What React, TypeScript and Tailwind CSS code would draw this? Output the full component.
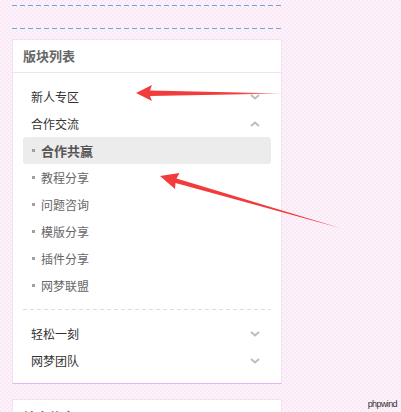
import React from 'react';

const cn = '"Noto Sans CJK SC", "Noto Sans", sans-serif';

const Chevron = ({ up = false }: { up?: boolean }) => (
  <svg width="10" height="6" viewBox="0 0 10 6" className="text-[#bdbdbd]">
    <path
      d={up ? 'M1 5 L5 1.5 L9 5' : 'M1 1 L5 4.5 L9 1'}
      fill="none"
      stroke="currentColor"
      strokeWidth="2"
    />
  </svg>
);

const TopItem = ({ label, up }: { label: string; up?: boolean }) => (
  <div className="flex h-[27px] items-center justify-between pl-2 pr-[11px] text-[12px] text-[#333]">
    <span>{label}</span>
    <Chevron up={up} />
  </div>
);

const SubItem = ({ label, active }: { label: string; active?: boolean }) => (
  <div
    className={
      'flex h-[27px] items-center gap-[6px] rounded-[3px] pl-[9px] ' +
      (active ? 'bg-[#ececec] text-[13px] font-bold text-[#555]' : 'text-[12px] text-[#666]')
    }
  >
    <span className="h-[3px] w-[3px] bg-[#a0a0a0]" />
    <span>{label}</span>
  </div>
);

const subs = ['合作共赢', '教程分享', '问题咨询', '模版分享', '插件分享', '网梦联盟'];

export default function App() {
  return (
    <div
      className="relative h-[412px] w-[401px] overflow-hidden bg-[#fcf0fa] bg-[conic-gradient(#fbe8f6_25%,#fdf3fb_0_50%,#fbe8f6_0_75%,#fdf3fb_0)] bg-[length:4px_4px]"
      style={{ fontFamily: cn }}
    >
      <div className="ml-3 w-[270px] pt-[5px]">
        <div className="h-px bg-[repeating-linear-gradient(90deg,#6fa7d7_0_5px,transparent_5px_8px)]" />
        <div className="mt-[22px] h-px bg-[repeating-linear-gradient(90deg,#6fa7d7_0_5px,transparent_5px_8px)]" />

        <div className="mt-[10px] border border-[#f4e0f6] border-b-[#e6b4ee] bg-white">
          <div className="flex h-[33px] items-center border-b border-[#f4e0f6] pl-[10px] text-[13px] font-bold text-[#666]">
            版块列表
          </div>
          <div className="px-[10px] pb-[9px] pt-[10px]">
            <TopItem label="新人专区" />
            <TopItem label="合作交流" up />
            {subs.map((s, i) => (
              <SubItem key={s} label={s} active={i === 0} />
            ))}
            <div className="my-[10px] h-px bg-[repeating-linear-gradient(90deg,#dcdcdc_0_4px,transparent_4px_7px)]" />
            <TopItem label="轻松一刻" />
            <TopItem label="网梦团队" />
          </div>
        </div>

        <div className="mt-[15px] border border-[#f4e0f6] bg-white">
          <div className="flex h-[33px] items-center pl-[10px] text-[13px] font-bold text-[#666]">
            站点信息
          </div>
        </div>
      </div>

      <span
        className="absolute right-[4px] top-[398px] whitespace-nowrap text-[9px] leading-[12px] tracking-[-0.6px] text-[#333]"
        style={{ fontFamily: '"Liberation Sans", Arial, sans-serif' }}
      >
        phpwind
      </span>

      <svg className="pointer-events-none absolute left-0 top-0" width="401" height="412">
        <defs>
          <linearGradient id="fade1" x1="0" x2="1" y1="0" y2="0">
            <stop offset="0.7" stopColor="#f23b3b" />
            <stop offset="1" stopColor="#f23b3b" stopOpacity="0.4" />
          </linearGradient>
        </defs>
        <polygon
          points="136,93 152,85 150,90.5 283,93.5 150,96 152,101"
          fill="url(#fade1)"
        />
        <polygon
          points="160,176 179.5,173 176.5,178.5 340,228 175.5,183 175,189"
          fill="#f23b3b"
        />
      </svg>
    </div>
  );
}
